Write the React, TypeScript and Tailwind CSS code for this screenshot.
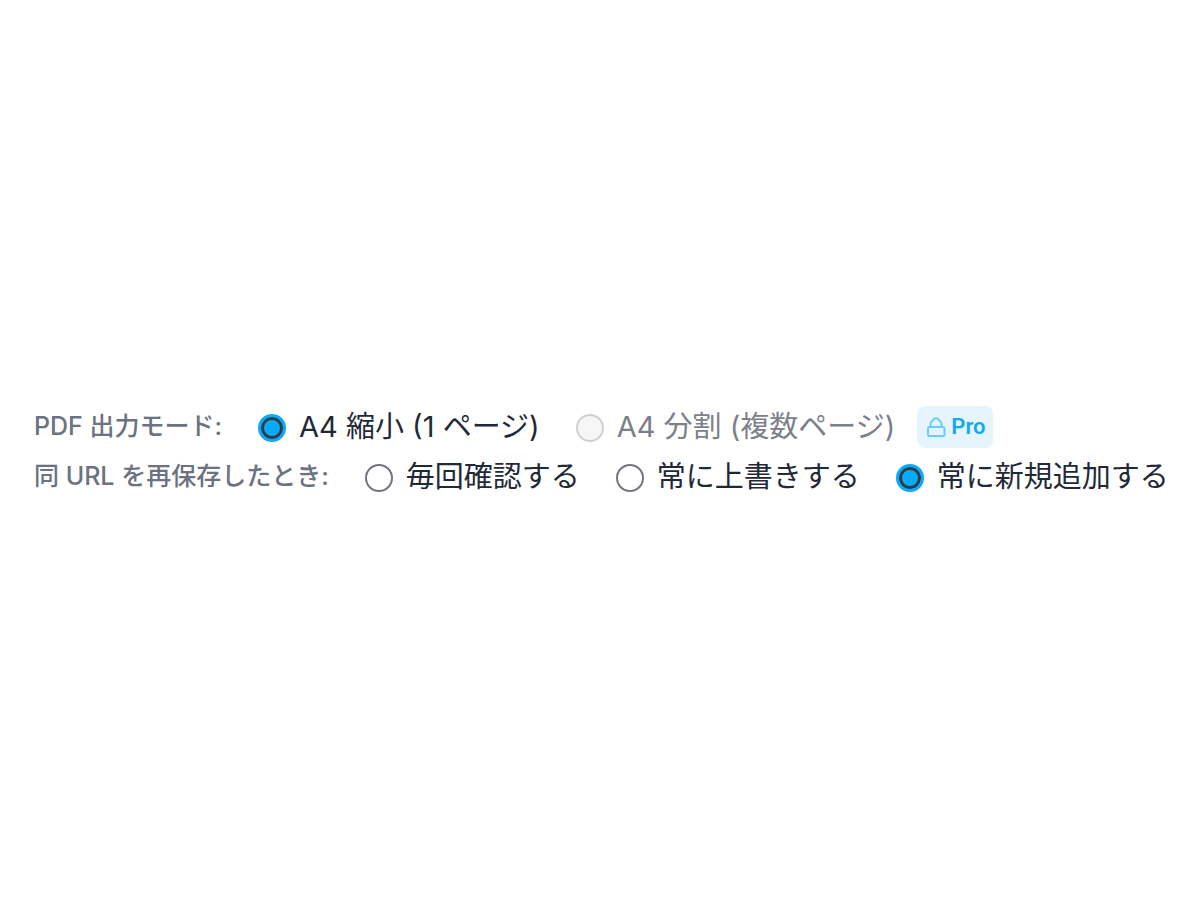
import { ReactNode, useState } from "react";

type RadioProps = {
    name: string;
    label: string;
    checked: boolean;
    disabled?: boolean;
    onSelect: () => void;
};

const Radio = ({ name, label, checked, disabled, onSelect }: RadioProps) => {
    return (
        <label
            className={
                disabled
                    ? "flex items-center gap-[13px] whitespace-nowrap text-[#7b8089]"
                    : "flex items-center gap-[13px] whitespace-nowrap text-[#1f2937]"
            }
        >
            <input
                type="radio"
                name={name}
                checked={checked}
                disabled={disabled}
                onChange={onSelect}
                className="mt-[2px] size-7 shrink-0 appearance-none rounded-full border-2 border-[#72757f] bg-white checked:border-3 checked:border-[#08abfc] checked:bg-[#08abfc] checked:shadow-[inset_0_0_0_3px_#343a43] disabled:border-[#d0d0d3] disabled:bg-[#f6f6f6]"
            />
            <span className="pt-px">{label}</span>
        </label>
    );
};

const Row = ({ title, children }: { title: string; children: ReactNode }) => {
    return (
        <fieldset className="flex h-[42px] items-center gap-9">
            <legend className="float-left pb-px whitespace-nowrap text-[25px] leading-[38px] font-medium text-[#6b7280]">
                {title}
            </legend>
            {children}
        </fieldset>
    );
};

const ProBadge = () => {
    return (
        <span className="flex h-[42px] items-center gap-1 rounded-lg bg-[#e6f4fe] px-2 font-['Roboto',sans-serif] text-[22px] font-semibold text-[#0eaaf3]">
            <svg width="22" height="24" viewBox="0 0 22 24" fill="none" aria-hidden="true">
                <rect x="3" y="12" width="16.5" height="9" rx="1.5" stroke="#6accf8" strokeWidth="2" />
                <path d="M5.5 12V9C5.5 7 9.5 3 11 3C12.5 3 16.5 7 16.5 9V12" stroke="#6accf8" strokeWidth="2" strokeLinejoin="round" />
            </svg>
            Pro
        </span>
    );
};

const App = () => {

    const [pdfMode, setPdfMode] = useState("fit");
    const [saveMode, setSaveMode] = useState("add");

    return (
        <main className="flex min-h-screen flex-col justify-center gap-2 bg-white pt-[2px] pl-[34px] font-['Inter','Noto_Sans_CJK_JP',sans-serif] text-[29px] leading-[42px]">
            <Row title="PDF 出力モード:">
                <Radio
                    name="pdfMode"
                    label="A4 縮小 (1 ページ)"
                    checked={pdfMode === "fit"}
                    onSelect={() => setPdfMode("fit")}
                />
                <div className="flex items-center gap-[22px]">
                    <Radio
                        name="pdfMode"
                        label="A4 分割 (複数ページ)"
                        checked={pdfMode === "split"}
                        disabled
                        onSelect={() => setPdfMode("split")}
                    />
                    <ProBadge />
                </div>
            </Row>
            <Row title="同 URL を再保存したとき:">
                <Radio
                    name="saveMode"
                    label="毎回確認する"
                    checked={saveMode === "ask"}
                    onSelect={() => setSaveMode("ask")}
                />
                <Radio
                    name="saveMode"
                    label="常に上書きする"
                    checked={saveMode === "overwrite"}
                    onSelect={() => setSaveMode("overwrite")}
                />
                <Radio
                    name="saveMode"
                    label="常に新規追加する"
                    checked={saveMode === "add"}
                    onSelect={() => setSaveMode("add")}
                />
            </Row>
        </main>
    );
};

export default App;
